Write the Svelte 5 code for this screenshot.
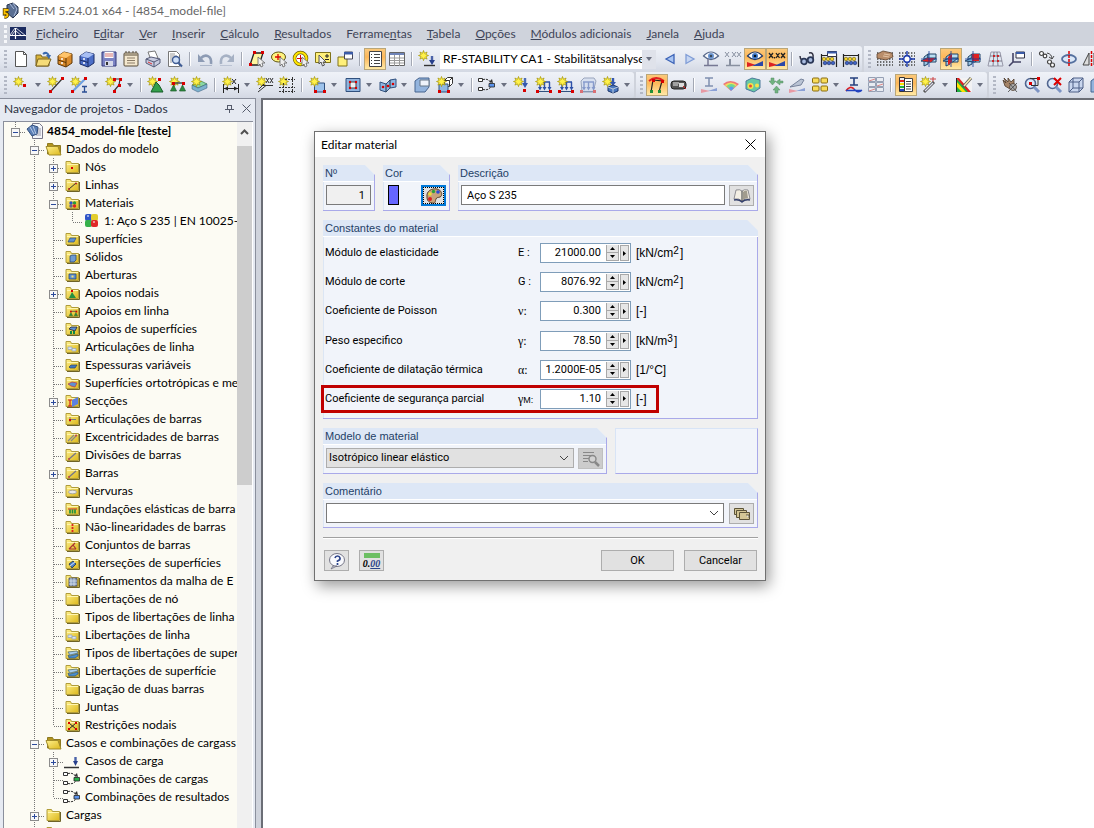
<script lang="ts">
	type Tool = { icon?: string; kind?: 'sep' | 'drop' | 'combo' | 'nav'; on?: boolean };
	type Node = { level: number; label: string; icon: string; open?: boolean; last?: boolean };

	// Reusable pieces of the 16x16 glyphs
	const star =
		'<path d="M4.500 -.5l1 2.800 2.600-1.300-1.200 2.600 2.600.9-2.600 1.100 1.200 2.500-2.600-1.200-1 2.700-1-2.700-2.600 1.200 1.200-2.500-2.600-1.100 2.600-.9L.9 1l2.600 1.300z" fill="#fff14a" stroke="#a39200" stroke-width=".7"/>';
	const dot = (x: number, y: number, c = '#d80000') => `<rect x="${x}" y="${y}" width="3" height="3" fill="${c}"/>`;
	const cursor = '<path d="M9 6v9l2-2 1 3 2-1-1-3h3z" fill="#eee" stroke="#666" stroke-width=".8"/>';
	const lens =
		'<circle cx="6.500" cy="6.500" r="5" fill="#dce9fb" stroke="#51658f" stroke-width="1.600"/><path d="M10 10l5 5" stroke="#7d94c4" stroke-width="3"/>';
	const wedge = '<path d="M0 16V11L9 14z" fill="#d22"/><path d="M16 15V10L5 15z" fill="#2b48a8"/>';
	const folder =
		'<path d="M1 2.500h4.500l1 2h7v9H1z" fill="url(#gold)" stroke="#b09c3a"/><path d="M2 5.500h11" stroke="#fff6b0"/><path d="M14.500 5v9.500H2" stroke="#6e6328" fill="none"/>';
	const table =
		'<path d="M.5 1.500h15v13H.5z" fill="#fff" stroke="#666"/><path d="M1 2h14v2H1z" fill="#6f84b8"/><path d="M1 7h14M1 9.500h14M1 12h14M5.500 4v11M10.500 4v11" stroke="#999"/>';
	const dots =
		'<path d="M0 2h16M0 5h16M0 8h16M0 11h16M0 14h16" stroke="#444" stroke-width="1.400" stroke-dasharray="1.400 1.600"/>';
	const drawer = (a: string, b: string, c: string) =>
		`<path d="M1 5l6-4 8 2v9l-6 4-8-3z" fill="${b}" stroke="${c}"/><path d="M1 5l8 2 6-4-8-2z" fill="${a}"/><path d="M9 7v9M1 9l8 2.500" stroke="${c}"/><path d="M4 8h2M4 12h2" stroke="#fff" stroke-width="1.500"/>`;
	const curve = (c: string) =>
		`<path d="M14 13C15 4 8 3 4 7" stroke="${c}" stroke-width="2.600" fill="none"/><path d="M1 3v8h7z" fill="${c}"/><path d="M3 14.500h12" stroke="${c}" opacity=".6"/>`;
	const planes = (r: string) =>
		`<path d="M3 6l4-3v10l-4 2z" fill="#9cc7e6" stroke="#246"/><path d="M7 3h8v8H7z" fill="#b8ddf2" stroke="#246"/><path d="M0 10l6-3h9l-5 4z" fill="#6caad6" stroke="#246"/>${r}<path d="M8 0v16M0 8h16" stroke="#123b9a" stroke-width=".8"/>`;
	const combi = (c: string) =>
		`<path d="M-1.500 1.500h4v3h-4zM-1.500 10.500h4v3h-4z" fill="#fff" stroke="#333"/><path d="M3 2.500c5-1 7 1 8 4M3 12.500c5 1 7-1 8-3" stroke="#333" stroke-dasharray="2 1" fill="none"/><path d="M9 6.500h5.500v3.500H9z" fill="${c}" stroke="#222" stroke-width=".8"/><path d="M9 5l4 1-1-4z" fill="#333"/>`;
	const supports =
		'<path d="M2 6h12" stroke="#444" stroke-width="1.500"/><path d="M3.500 8l3 6h-6zM12.500 8l3 6h-6z" fill="#2d8a3f" stroke="#1b5c28" stroke-width=".7"/>' + dot(2, 5) + dot(12, 5);
	const abacus =
		'<path d="M.5 3v13M15.500 3v13M1 4.500h14" stroke="#222" stroke-width="1.200"/><g fill="#3d62c4" stroke="#12245e" stroke-width=".6"><circle cx="4" cy="12" r="1.800"/><circle cx="8" cy="12" r="1.800"/><circle cx="12" cy="12" r="1.800"/></g><g fill="#f4d428" stroke="#665500" stroke-width=".6"><circle cx="3" cy="8" r="1.800"/><circle cx="7" cy="8" r="1.800"/><circle cx="11" cy="8" r="1.800"/></g>';
	const eye = (y: number) =>
		`<path d="M.5 ${y}q7.500-8 15 0q-7.500 7-15 0z" fill="#fff" stroke="#243a66" stroke-width="1.200"/><circle cx="8" cy="${y}" r="3" fill="#3f78c8"/><circle cx="8" cy="${y}" r="1.300" fill="#012"/>`;
	const cube =
		'<path d="M1 5l4-4h10v10l-4 4H1z" fill="#c9d6ee" stroke="#4d5f86"/><path d="M1 5h10v10M11 5l4-4M5 1v10h10M5 11l-4 4" stroke="#4d5f86" fill="none"/>';
	const loads =
		'<path d="M2 14.500h12" stroke="#30507e"/><path d="M3 5h11M4 5v6M8.500 5v6M13.500 5v6" stroke="#2c50a8" stroke-width="1.400" fill="none"/><path d="M2 10h4l-2 3.500zM6.500 10h4l-2 3.500zM11.500 10h4l-2 3.500z" fill="#2c50a8"/><rect x="0" y="13" width="3" height="3" fill="#d80000"/><rect x="13" y="13" width="3" height="3" fill="#d80000"/>';
	const hand =
		'<path d="M0 3l6-3 9 2 1 4-7 3-5-1-4-1z" fill="#b98d6a" stroke="#5f4530" stroke-width=".8"/><path d="M6 5l6 1M7 3l6 1" stroke="#e2c3a4"/>';
	const stack = (a: string) =>
		`<path d="M0 8l6 3 9-4-6-3z" fill="${a}" stroke="#357a50" stroke-width=".7"/><path d="M0 12l6 3 9-4V7l-9 4-6-3z" fill="#7db2cf" stroke="#357" stroke-width=".5"/>`;
	const small = (body: string) => `<g transform="translate(4 5) scale(.55)">${body}</g>`;

	const icons: Record<string, string> = {
		app: '<path d="M5 2l6-2 5 4v6l-5 5-6-5z" fill="#5a6f93" stroke="#26344e"/><path d="M8 1l4 5M11 0l4 6-3 7" stroke="#a9badb" fill="none"/><path d="M6.500 7H2.500v3.500c4-1 4 4 0 3.500" stroke="#4a3700" stroke-width="3.400" fill="none"/><path d="M6.500 7H2.500v3.500c4-1 4 4 0 3.500" stroke="#ffc400" stroke-width="1.900" fill="none"/>',
		bridge: '<path d="M0 1h16v13H0z" fill="#1c2c60"/><path d="M0 9.500h16M5.500 2v11" stroke="#fff" stroke-width="1.200"/><path d="M5 2L0 9M6 2l10 8M6 5l6 5M5 5L2 9" stroke="#fff" stroke-width=".8"/>',
		new: '<path d="M2.500.5h8l3 3v12h-11z" fill="#fff" stroke="#555"/><path d="M10.500.5v3h3" fill="none" stroke="#555"/>',
		open: '<path d="M1 4h5l1 2h7v9H1z" fill="#d9b43a" stroke="#7a6320"/><path d="M3 8h13l-3 7H1z" fill="#f6dc78" stroke="#7a6320"/><path d="M8 3q4-3 6 2" stroke="#3c6bb0" stroke-width="2" fill="none"/><path d="M11 4h5l-2 4z" fill="#3c6bb0"/>',
		drawerA: drawer('#ffc46a', '#d98a2b', '#5c3607'),
		drawerB: drawer('#a8bff4', '#4d6fc8', '#1b2c66'),
		save: '<path d="M1 1h14v14H1z" fill="#7c84c4" stroke="#33397a"/><path d="M3.500 1h9v6h-9z" fill="#fff"/><path d="M4 3h8M4 5h8" stroke="#b33" stroke-width=".7"/><path d="M4 10h8v5H4z" fill="#d5d8ea"/><path d="M5 11h2v3H5z" fill="#333"/>',
		clip: '<rect x="1" y="2" width="14" height="13" rx="1" fill="#f4e8cf" stroke="#574a36"/><path d="M3 2V0M6 2V0M10 2V0M13 2V0M1.500 4h13" stroke="#574a36"/><path d="M4 7h8M4 9.500h8M4 12h8" stroke="#8b7d68"/>',
		print: '<path d="M3 1l7-1 3 7-7 2z" fill="#fff" stroke="#777"/><path d="M1 8l5-2 9 2v4l-6 4-8-4z" fill="#c7cbe0" stroke="#555a77"/><path d="M1 8l8 3 6-3M9 11v5" stroke="#555a77" fill="none"/><path d="M3 11l4 2" stroke="#d33"/>',
		preview: '<path d="M1.500.5h8l3 3v12h-11z" fill="#fff" stroke="#777"/><path d="M3 3h5M3 5h7M3 7h3M3 9h2M3 11h2" stroke="#999"/><circle cx="9" cy="9" r="3.500" fill="#cfe0f8" stroke="#3f5c94" stroke-width="1.400"/><path d="M11.500 12l3.500 3.500" stroke="#3f5c94" stroke-width="2.200"/>',
		undo: curve('#8d9bb4'),
		redo: `<g transform="matrix(-1 0 0 1 16 0)">${curve('#a6b1c4')}</g>`,
		selPoly: '<path d="M5 2h9l-4 12H1z" fill="#fff6a0" stroke="#222" stroke-width="1.300"/>' + dot(4, 0) + dot(12, 0) + dot(0, 12) + cursor,
		selEllipse: '<ellipse cx="7.500" cy="6" rx="7" ry="5" fill="#fdf27e" stroke="#5e5310"/><path d="M7 3v6M4 6h6" stroke="#d00" stroke-width="1.300"/>' + cursor,
		selRing: '<circle cx="7.500" cy="7.500" r="6" fill="#fff" stroke="#6b5a00" stroke-width="3.500"/><circle cx="7.500" cy="7.500" r="6" fill="none" stroke="#ffe600" stroke-width="2.200"/><path d="M7.500 4v7M4 7.500h7" stroke="#d00"/>' + cursor,
		selPlus: '<path d="M.5 1.500h15v10H.5z" fill="#fff07a" stroke="#80731a"/><path d="M12 3v4M10 5h4M10 8.500h4" stroke="#222"/><path d="M4 4v9l2-2 1.500 4 2-1-1.500-3h3z" fill="#eee" stroke="#555"/>',
		window: '<path d="M1 6h9v9H1z" fill="#fff07a" stroke="#80731a"/><path d="M7.500 1h8v7h-8z" fill="#fff" stroke="#445"/><path d="M7 1h9v2.500H7z" fill="#3a5ba8"/>',
		list: '<path d="M2.500.5h12v15h-12z" fill="#fff" stroke="#444"/><path d="M7 3.500h6M7 6.500h6M7 9.500h6M7 12.500h6" stroke="#444"/><path d="M4.500 3v11" stroke="#333" stroke-dasharray="1 2"/>',
		table,
		loadcase: star + '<path d="M5 14.500h11" stroke="#333" stroke-width="1.400"/><path d="M13 5v4" stroke="#4a62a8" stroke-width="2.400"/><path d="M10 9h6l-3 5z" fill="#28408c"/>',
		left: '<path d="M12 3.500v9L4 8z" fill="#a9c5f2" stroke="#3b62b6" stroke-width="1.300"/>',
		right: '<path d="M4 3.500v9L12 8z" fill="#c6d6f2" stroke="#7f9cd6" stroke-width="1.300"/>',
		eyeLoad: '<g opacity=".75">' + eye(5) + '<path d="M5 8v6M1 14.500h14" stroke="#557" stroke-width="1.500"/></g>',
		xxLoad: '<g stroke="#8890a0" fill="none"><path d="M0 1l4 5M4 1L0 6M7 1l4 5M11 1L7 6M12 1l4 5M16 1l-4 5"/><path d="M5 8v6" stroke-width="2"/><path d="M1 14.500h14" stroke-width="1.500"/></g>',
		eyeOn: eye(5) + wedge,
		xxOn: '<path d="M0 2l4 5M4 2L0 7M5.500 6v1.500M7 2l3.500 5M10.500 2L7 7M12 2l4 5M16 2l-4 5" stroke="#222" stroke-width="1.300"/>' + wedge,
		glasses: '<path d="M1 5q0 3 2 4M10 2q5-1 4 5" stroke="#334" stroke-width="1.500" fill="none"/><circle cx="5" cy="10.500" r="2.800" fill="#a8bbdf" stroke="#2b3858" stroke-width="1.800"/><circle cx="11.500" cy="9" r="2.800" fill="#a8bbdf" stroke="#2b3858" stroke-width="1.800"/>',
		abacusWin: abacus + '<path d="M6.500 .5h9v5h-9z" fill="#fff" stroke="#334"/><path d="M6 1.500h10" stroke="#3a5ba8" stroke-width="2"/>',
		abacus,
		gridHand: dots + hand,
		gridSnap: dots + '<path d="M8 0v16M0 8h16" stroke="#1c3bb0" stroke-width="1.400"/><circle cx="8" cy="8" r="3.200" fill="#fff" stroke="#1c3bb0" stroke-width="1.400"/>',
		planeA: planes('<path d="M1 10l5-3h8l-4 4z" fill="#e02020"/>'),
		planeB: planes('<path d="M5 6l4-3v8l-4 3z" fill="#e02020"/>'),
		planeC: planes('<path d="M7 3h7v7H7z" fill="#e02020"/>'),
		warp: '<path d="M4 1h9l3 14H1z" fill="#dfe6f0" stroke="#99a"/><path d="M7 1L6 15M10 1l1 14M3 5h11M2 10h13" stroke="#667" stroke-width=".8"/><g fill="#d80000"><circle cx="7" cy="5" r="1"/><circle cx="11" cy="5" r="1"/><circle cx="6" cy="10" r="1"/><circle cx="11" cy="10" r="1"/></g>',
		axisWin: '<path d="M4 2v9h8M4 11l-4 4" stroke="#446" stroke-width="1.600" fill="none"/><path d="M7 1h8.500v6H7z" fill="#fff" stroke="#334"/><path d="M7 2h8.500" stroke="#3a5ba8" stroke-width="2"/>',
		copyNodes: '<g fill="#fff" stroke="#444" stroke-width="1.200"><circle cx="2.500" cy="2.500" r="2"/><circle cx="6" cy="5" r="1.800"/><circle cx="10.500" cy="11" r="2"/><circle cx="13.500" cy="14" r="2"/></g><path d="M8 2q5 1 5 6M10 6l3 2 2-3" stroke="#444" fill="none"/>',
		rotate: '<ellipse cx="8" cy="8" rx="7" ry="4" fill="#dbe7f8" stroke="#55709f" stroke-width="1.800"/><path d="M8 0v16" stroke="#d00" stroke-width="1.500" stroke-dasharray="3 1"/>',
		mirror: '<path d="M6 2v12H0z" fill="#ddd" stroke="#444"/><path d="M8.500 0v16" stroke="#d00" stroke-width="1.500" stroke-dasharray="3 1"/><path d="M11 2v12h5z" fill="#ddd" stroke="#444"/>',

		node: star + dot(9, 7),
		line: star + '<path d="M3 14L14 2" stroke="#333" stroke-width="1.200"/>' + dot(1, 13) + dot(13, 0),
		member: star + '<path d="M2 14L14 2" stroke="#6e9fdf" stroke-width="2.200"/><path d="M11 9.500h5M11 15h5M13.500 9v6" stroke="#2a4e94" stroke-width="1.300"/>' + dot(0, 13) + dot(13, 0),
		poly: star + '<path d="M8 2h6l-1 6-5 6" stroke="#333" stroke-width="1.200" fill="none"/>' + dot(7, 1) + dot(13, 1) + dot(12, 7) + dot(7, 13),
		support: star + dot(10, 1) + '<path d="M8 5l3 3 4 7H3l3-6z" fill="#34a04c" stroke="#165c28"/>',
		supports: star + supports,
		surfSupport: stack('#8ad7a4') + star,
		dim: star + '<path d="M.5 7v9M15.500 7v9M1 11.500h14" stroke="#222"/><path d="M1 11.500l4-2v4zM15 11.500l-4-2v4z" fill="#222"/><path d="M9 2l4 5M13 2L9 7" stroke="#222"/>',
		xx: star + '<path d="M9 1l3 5M12 1L9 6M13 1l3 5M16 1l-3 5M6 8.500h10M9 8.500L1 15M7 7l-5 5" stroke="#333" fill="none"/>',
		guides: star + '<path d="M0 10.500h16M0 14.500h16M4.500 6v10M13.500 0v16M6 2.500h10" stroke="#333" stroke-dasharray="2 1"/>',
		surface: '<path d="M4.500 6h10v9h-10z" fill="#9dc3ec" stroke="#30507e"/>' + star + dot(4, 13) + dot(13, 13),
		opening: '<path d="M1 1.500h14v13H1z" fill="#8fb3dd" stroke="#30507e"/><path d="M5 5h6v6H5z" fill="#eef0f4" stroke="#444"/><g fill="#d80000"><circle cx="5" cy="5" r="1.200"/><circle cx="11" cy="5" r="1.200"/><circle cx="5" cy="11" r="1.200"/><circle cx="11" cy="11" r="1.200"/></g>',
		bridgeSurf: '<path d="M0 5l6 2 4-4 6-1v8l-6 1-4 4-6-2z" fill="#8fb7e2" stroke="#30507e"/><path d="M6 7v8M10 3v8" stroke="#234"/><g fill="#d80000"><circle cx="3" cy="10" r="1.300"/><circle cx="8" cy="9" r="1.300"/><circle cx="13" cy="7" r="1.300"/></g>',
		solid: '<path d="M1 4l4-3h10v9l-4 5H1z" fill="#93b4de" stroke="#47648f"/><path d="M6 3h9v6H6z" fill="#eef3fb" stroke="#678"/>',
		solidNew: '<path d="M7.500 3.500l3-3h5v6l-3 3h-5z" fill="#fff" stroke="#333"/><path d="M7 3.500h5.500V9M12.500 3.500l3-3" stroke="#333" fill="none"/><path d="M2 7h9v8H2z" fill="#8fb7e2" stroke="#30507e"/>' + star + dot(10, 13) + dot(1, 13),
		combiBlue: combi('#5b93ec'),
		nodeLoad: star + '<path d="M11 1v5" stroke="#4a6cb8" stroke-width="2.400"/><path d="M8 6h6l-3 5z" fill="#3458ae"/>' + dot(9, 12),
		lineLoad: loads + star,
		memberLoad: loads + star,
		surfLoad: '<g opacity=".5"><path d="M4 1h10l2 3-3 11H2L1 4z" fill="#c9d6ee" stroke="#4d5f86"/>' + loads + '</g>',
		solidLoad: star + '<path d="M10 1v4" stroke="#3458ae" stroke-width="2.400"/><path d="M7 5h6l-3 4z" fill="#3458ae"/><path d="M5 10l5-2 5 2v4l-5 2-5-2z" fill="#4a78c0" stroke="#1d376c"/><path d="M5 10l5 2 5-2M10 12v4" stroke="#bcd" fill="none"/>',
		frame: '<path d="M2 15L4 3l9 1-3 11" stroke="#222" stroke-width="1.200" fill="none"/><path d="M0 4q7-6 15 0" stroke="#e02020" stroke-width="1.800" fill="none"/>' + dot(1, 13, '#229038') + dot(9, 13, '#229038') + dot(3, 2) + dot(12, 3),
		tape: '<rect x="0" y="4" width="15" height="8" rx="3" fill="#555" stroke="#222"/><path d="M2 6h6M2 8h5" stroke="#eee"/><rect x="8" y="6" width="5" height="4" fill="#ddd"/><path d="M12 9l3 3" stroke="#d22"/>',
		moment: '<path d="M4 1h8M8 1v8M4 9h8" stroke="#8090b0" stroke-width="1.500"/><path d="M0 16v-4l9 2z" fill="#e79aa4"/><path d="M16 11v3H7z" fill="#8aa0d6"/>',
		rainbow: '<path d="M0 7q7-6 16 0l-8 7z" fill="#f07878"/><path d="M1.500 8q6-5 12.500 0l-6 5z" fill="#f0dc60"/><path d="M3.500 9q5-4 9 0l-5 4z" fill="#70d890"/><path d="M6 11q2-3 5 0l-3 3z" fill="#5c9cf0"/>',
		isoCube: '<path d="M1 4l6-3 8 2v8l-6 4-8-3z" fill="#66c9a4" stroke="#4c7a9a"/><circle cx="5.500" cy="9" r="3" fill="#f5e24a"/><circle cx="5.500" cy="9" r="1.500" fill="#e34b3a"/><circle cx="12" cy="8.500" r="2" fill="#f5e24a"/>',
		arrowsG: '<g fill="#6fb27f" stroke="#5a8f68" stroke-width=".5"><path d="M4 1h3v3h2L5.500 8 2 4h2z"/><path d="M16 4h-3V2l-4 3 4 3V6h3z"/><path d="M8 16h3v-3h2L9.500 9 6 13h2z"/></g>',
		blade: '<path d="M1 10L12 2l3 1-3 5z" fill="#b9c3d4" stroke="#78849c"/><path d="M0 16v-4l9 2z" fill="#e79aa4"/><path d="M16 11v3H7z" fill="#8aa0d6"/>',
		blocks: '<g fill="#f8dc5a" stroke="#8a6d10"><rect x=".5" y="1" width="6.500" height="5" rx="1"/><rect x="9" y="1" width="6.500" height="5" rx="1"/><rect x=".5" y="9" width="6.500" height="5" rx="1"/><rect x="9" y="9" width="6.500" height="5" rx="1"/></g>',
		ibeam: '<path d="M4 1h8M8 1v7M4 8h8" stroke="#26407e" stroke-width="1.600"/><path d="M0 14q4-6 8-2" stroke="#d22" stroke-width="1.800" fill="none"/><path d="M0 13.500h16M8 12q4 5 8 1" stroke="#2343c0" stroke-width="1.300" fill="none"/>',
		waves: '<path d="M.5.500h7v4h-7zM8.500.500h7v4h-7zM.5 5.500h7v4h-7zM8.500 5.500h7v4h-7zM.5 10.500h7v4h-7zM8.500 10.500h7v4h-7z" fill="#e8ebf2" stroke="#96a0b4"/><path d="M1 4l6-2M9 9l6-2M1 14l6-2" stroke="#d88"/>',
		legend: '<path d="M4.500 1.500h10v13h-10z" fill="#fff" stroke="#444"/><path d="M8 4.500h5M8 7h5M8 9.500h5M8 12h5" stroke="#444"/><path d="M1.500.500h5v14h-5z" fill="#eee" stroke="#333"/><path d="M2 3h4v2H2z" fill="#e02020"/><path d="M2 6h4v2H2z" fill="#ffe000"/><path d="M2 9h4v2H2z" fill="#20b040"/><path d="M2 12h4v2H2z" fill="#2343c0"/>',
		wand: star + '<path d="M9 2h6M12 0v5" stroke="#c44"/><path d="M3 15L13 5" stroke="#555" stroke-width="3"/><path d="M4 14l8-8" stroke="#dde" stroke-width="1.200"/>',
		palette: '<path d="M0 1h16v14H0z" fill="#f2f2f4"/><path d="M0 1v14h14z" fill="#20b040"/><path d="M0 1h3l12 14h-3z" fill="#e02020"/><path d="M0 4l10 11H6L0 9z" fill="#ffe000"/><path d="M.5 1v14" stroke="#222"/><path d="M15 1L7 10" stroke="#555" stroke-width="3"/><path d="M15 1L8 9" stroke="#f4e6b0" stroke-width="1.600"/>',
		pan: '<g fill="#a58468" stroke="#4d3a2a" stroke-width=".8"><path d="M1 3l3 3-2-5 4 4V1l3 4 3-3v6l-4 4-5-3z"/><circle cx="11" cy="10" r="3.500" fill="#aaa"/></g><path d="M6 15l9-9M7 6l8 9" stroke="#444" stroke-width=".8"/>',
		zoomWin: lens + '<path d="M6 1.500h8v7H7" stroke="#333" fill="none"/>' + dot(13, 0) + dot(5, 5),
		zoomX: lens + '<path d="M8 1l7 7M15 1L8 8" stroke="#d00" stroke-width="2"/>',
		cube,

		// tree
		doc: '<path d="M5.500.5h7l3 3v12h-10z" fill="#f4f6fa" stroke="#778"/><path d="M10 6h4M10 8h4M9 10h5M9 12h5" stroke="#99a"/><path d="M0 6l5-4 6 2-1 7-5 2z" fill="#5b7fb6" stroke="#33507e"/><path d="M3 4l4 7M6 3l3 8" stroke="#b8cbe6"/>',
		folderOpen: '<path d="M1.500 13V2.500h5l1 2h7v8z" fill="#b3951f" stroke="#8d7a22"/><path d="M0 5.500h12l3 8.500H3z" fill="url(#gold)" stroke="#a08b2a"/>',
		folder,
		fNode: folder + '<rect x="6" y="8" width="2" height="2" fill="#d80000"/>',
		fLine: folder + '<path d="M4 12l7-6" stroke="#333"/><g fill="#a22"><circle cx="4" cy="12" r="1"/><circle cx="11" cy="6.500" r="1"/></g>',
		fMat: folder + '<circle cx="6" cy="8" r="1.700" fill="#2b50c8"/><circle cx="9.500" cy="8" r="1.700" fill="#2a9a3a"/><circle cx="6" cy="11" r="1.700" fill="#668"/><circle cx="9.500" cy="11" r="1.700" fill="#d22"/>',
		mat: '<rect x="1" y="1" width="7" height="7" rx="2" fill="#2f55c8"/><rect x="7" y="1" width="7" height="7" rx="2" fill="#e3cd2c"/><rect x="1" y="7" width="7" height="7" rx="2" fill="#35b04a"/><rect x="7" y="7" width="7" height="7" rx="2" fill="#e02828"/><path d="M3 3h2M9 9h2" stroke="#fff"/>',
		fSurf: folder + '<path d="M3 11l2-4h6l-2 4z" fill="#5e90d0" stroke="#294a7a" stroke-width=".7"/>',
		fSolid: folder + '<path d="M5 7l2-1h4v5l-2 2H5z" fill="#6f9bd0" stroke="#294a7a" stroke-width=".8"/>',
		fOpen: folder + '<path d="M4 7h7v5H4z" fill="#5e90d0" stroke="#294a7a" stroke-width=".8"/><path d="M6.500 8.500h2v2h-2z" fill="#f4e070"/>',
		fSupp: folder + '<rect x="6" y="5" width="2" height="2" fill="#d80000"/><path d="M7 7l4 6H4z" fill="#249040"/>',
		fSupps: folder + small(supports),
		fSurfSupp: folder + '<path d="M4 8l2-2h6l-2 4z" fill="#5e90d0" stroke="#223" stroke-width=".8"/><path d="M6 10v3M9 10v3" stroke="#184" stroke-width="2"/>',
		fHinge: folder + '<path d="M3 8h4v2.500H3zM7 9.500h4V12H7z" fill="#dfe6f0" stroke="#9ab" stroke-width=".8"/>',
		fThick: folder + '<path d="M4 10l2-2h6l-2 3H5z" fill="#3e78c4" stroke="#345" stroke-width=".7"/>',
		fOrtho: folder + '<path d="M3 9l4-2 5 1-2 4-4-1z" fill="#5e90d0" stroke="#b44" stroke-width=".8"/>',
		fSect: folder + '<path d="M7 7l6-3v7l-6 3z" fill="#5b80e0"/><path d="M3 7h4M5 7v6M3 13h4" stroke="#c22" stroke-width="1.200"/>',
		fMHinge: folder + '<path d="M5 6v5M6 8.500h5" stroke="#777"/><rect x="4" y="8" width="2" height="2" fill="#d80000"/>',
		fEcc: folder + '<path d="M3 12l6-6M6 12l6-6" stroke="#888" stroke-width="1.200"/><circle cx="11" cy="6.500" r="1" fill="#c44"/>',
		fBar: folder + '<path d="M4 12l7-6" stroke="#778" stroke-width="1.400"/><circle cx="4" cy="12" r="1" fill="#b44"/>',
		fRib: folder + '<ellipse cx="7.500" cy="9" rx="4" ry="1.800" fill="#e8e8e8" stroke="#999" stroke-width=".8"/>',
		fFound: folder + '<path d="M3 8h9" stroke="#c22"/><path d="M5 8.500v4M7.500 8.500v4M10 8.500v4" stroke="#249040" stroke-width="1.700"/>',
		fNonlin: folder + '<path d="M7.500 5v8" stroke="#d22" stroke-width="1.800" stroke-dasharray="2 1"/>',
		fSet: folder + '<path d="M4 12l6-6M4 12h7M8 8l3 4" stroke="#a33" stroke-width="1.200"/>',
		fInter: folder + '<path d="M4 9l4-3 3 3-4 4z" fill="#4a80cc" stroke="#234" stroke-width=".8"/><path d="M5 11l5-4" stroke="#fff" stroke-width=".8"/>',
		fMesh: folder + '<path d="M4 5h8v8H4z" fill="#8aa0c0" stroke="#445" stroke-width=".8"/><path d="M6 5v8M9 5v8M4 8h8M4 11h8" stroke="#dfe6f0" stroke-width=".7"/>',
		fRel: folder + '<path d="M3 7l9-1 1 2-8 2z" fill="#a8cdf0" stroke="#467" stroke-width=".7"/><path d="M3 10l2 1 8-2v2l-3 2H4z" fill="#4a90d0" stroke="#357" stroke-width=".7"/>',
		fRestr: folder + '<path d="M4 6l7 6M11 6l-7 6" stroke="#222"/><g fill="#d80000"><rect x="3" y="5" width="2" height="2"/><rect x="10" y="5" width="2" height="2"/><rect x="3" y="11" width="2" height="2"/><rect x="10" y="11" width="2" height="2"/></g>',
		load: '<path d="M-1 14.500h15" stroke="#333" stroke-width="1.500"/><path d="M10.500 4v4" stroke="#4a62a8" stroke-width="2.400"/><path d="M8 8h5l-2.500 5z" fill="#28408c"/>',
		combiG: combi('#28b048'),

		// dialog
		paint: '<path d="M1 9C0 3 6 0 11 1s6 7 3 8-3 0-4 2 0 5-4 4-5-3-5-6z" fill="#c9a27a" stroke="#5a4128"/><circle cx="4" cy="6" r="1.800" fill="#efe030"/><circle cx="7.500" cy="3.500" r="1.700" fill="#2ba23a"/><circle cx="12" cy="4" r="1.800" fill="#2848d8"/><circle cx="4" cy="11" r="2" fill="#d82020"/>',
		book: '<path d="M0 11l2-9q4-1 6 1 2-2 6-1l2 9q-5-1-8 2-3-3-8-2z" fill="#f3efe4" stroke="#77777f" stroke-width=".8"/><path d="M8 3v10" stroke="#555" stroke-width="1.200"/><path d="M9 4q2-2 4-1l1 7q-3 0-5 2z" fill="#a19c8e"/><path d="M0 12q5-1 8 2 3-3 8-2" stroke="#34406c" stroke-width="1.500" fill="none"/>',
		detail: '<path d="M0 1.500h11M0 4.500h9M0 7.500h6M0 10.500h5" stroke="#888"/><circle cx="9.500" cy="8" r="3.500" fill="#d2d2d2" stroke="#888" stroke-width="1.400"/><path d="M12 11l4 4" stroke="#888" stroke-width="2.500"/>',
		cards: '<g fill="#d4c695" stroke="#5c5438"><path d="M.5 2.500h9v6h-9z"/><path d="M2.500 4.500h10v7h-10z"/><path d="M5.500 6.500h10v7h-10z"/></g><path d="M12 9h3v3" fill="#fff" stroke="#5c5438"/>',
		help: '<ellipse cx="8" cy="7" rx="7.500" ry="6.500" fill="#f8f9fd" stroke="#778"/><path d="M4 13l-2 3 6-3z" fill="#ccd" stroke="#667" stroke-width=".7"/><path d="M6 5q.5-2 2.500-2t2.500 2-2.500 3v1M8.500 10v2" stroke="#2c448a" stroke-width="1.700" fill="none"/>'
	};

	const menus = [
		'&Ficheiro', 'E&ditar', '&Ver', '&Inserir', '&Cálculo', '&Resultados', 'Ferrame&ntas',
		'&Tabela', '&Opções', '&Módulos adicionais', '&Janela', '&Ajuda'
	].map((text) => {
		const at = text.indexOf('&');
		return { before: text.slice(0, at), key: text[at + 1], after: text.slice(at + 2) };
	});

	// "|" separator, "+" split button with caret, "*" pressed, "<" narrow
	function parseTools(line: string): Tool[] {
		return line.split(' ').map((word) => {
			if (word === '|') return { kind: 'sep' };
			if (word === 'COMBO') return { kind: 'combo' };
			if (word.startsWith('+')) return { kind: 'drop', icon: word.slice(1) };
			if (word.startsWith('*')) return { on: true, icon: word.slice(1) };
			if (word.startsWith('<')) return { kind: 'nav', icon: word.slice(1) };
			return { icon: word };
		});
	}

	const toolRows: Tool[][][] = [
		[
			'new open drawerA drawerB save clip print preview | undo redo | selPoly selEllipse selRing selPlus window | *list table | loadcase COMBO <left <right eyeLoad xxLoad *eyeOn *xxOn | glasses abacusWin abacus',
			'gridHand gridSnap planeA *planeB planeC warp axisWin | copyNodes rotate mirror'
		].map(parseTools),
		[
			'+node line +member +poly | support supports surfSupport | +dim xx guides | +surface +opening +bridgeSurf solid +solidNew | +combiBlue nodeLoad lineLoad memberLoad surfLoad +solidLoad',
			'*frame tape | moment rainbow isoCube arrowsG blade +blocks ibeam waves | *legend +wand +palette',
			'pan zoomWin zoomX cube solid'
		].map(parseTools)
	];

	let nodes: Node[] = [
		{ level: 0, label: '4854_model-file [teste]', icon: 'doc', open: true, last: true },
		{ level: 1, label: 'Dados do modelo', icon: 'folderOpen', open: true },
		{ level: 2, label: 'Nós', icon: 'fNode', open: false },
		{ level: 2, label: 'Linhas', icon: 'fLine', open: false },
		{ level: 2, label: 'Materiais', icon: 'fMat', open: true },
		{ level: 3, label: '1: Aço S 235 | EN 10025-2:', icon: 'mat', last: true },
		{ level: 2, label: 'Superfícies', icon: 'fSurf' },
		{ level: 2, label: 'Sólidos', icon: 'fSolid' },
		{ level: 2, label: 'Aberturas', icon: 'fOpen' },
		{ level: 2, label: 'Apoios nodais', icon: 'fSupp', open: false },
		{ level: 2, label: 'Apoios em linha', icon: 'fSupps' },
		{ level: 2, label: 'Apoios de superfícies', icon: 'fSurfSupp' },
		{ level: 2, label: 'Articulações de linha', icon: 'fHinge' },
		{ level: 2, label: 'Espessuras variáveis', icon: 'fThick' },
		{ level: 2, label: 'Superfícies ortotrópicas e me', icon: 'fOrtho' },
		{ level: 2, label: 'Secções', icon: 'fSect', open: false },
		{ level: 2, label: 'Articulações de barras', icon: 'fMHinge' },
		{ level: 2, label: 'Excentricidades de barras', icon: 'fEcc' },
		{ level: 2, label: 'Divisões de barras', icon: 'fBar' },
		{ level: 2, label: 'Barras', icon: 'fBar', open: false },
		{ level: 2, label: 'Nervuras', icon: 'fRib' },
		{ level: 2, label: 'Fundações elásticas de barra', icon: 'fFound' },
		{ level: 2, label: 'Não-linearidades de barras', icon: 'fNonlin' },
		{ level: 2, label: 'Conjuntos de barras', icon: 'fSet' },
		{ level: 2, label: 'Interseções de superfícies', icon: 'fInter' },
		{ level: 2, label: 'Refinamentos da malha de E', icon: 'fMesh' },
		{ level: 2, label: 'Libertações de nó', icon: 'folder' },
		{ level: 2, label: 'Tipos de libertações de linha', icon: 'folder' },
		{ level: 2, label: 'Libertações de linha', icon: 'fHinge' },
		{ level: 2, label: 'Tipos de libertações de super', icon: 'fRel' },
		{ level: 2, label: 'Libertações de superfície', icon: 'fRel' },
		{ level: 2, label: 'Ligação de duas barras', icon: 'folder' },
		{ level: 2, label: 'Juntas', icon: 'folder' },
		{ level: 2, label: 'Restrições nodais', icon: 'fRestr', last: true },
		{ level: 1, label: 'Casos e combinações de cargass', icon: 'folderOpen', open: true },
		{ level: 2, label: 'Casos de carga', icon: 'load', open: false },
		{ level: 2, label: 'Combinações de cargas', icon: 'combiG' },
		{ level: 2, label: 'Combinações de resultados', icon: 'combiBlue', last: true },
		{ level: 1, label: 'Cargas', icon: 'folder', open: false },
		{ level: 1, label: '', icon: 'folder' }
	];

	let constants = [
		{ id: 'e', label: 'Módulo de elasticidade', symbol: 'E :', value: '21000.00', unit: 'kN/cm', power: '2' },
		{ id: 'g', label: 'Módulo de corte', symbol: 'G :', value: '8076.92', unit: 'kN/cm', power: '2' },
		{ id: 'nu', label: 'Coeficiente de Poisson', symbol: 'ν:', value: '0.300', unit: '-', power: '' },
		{ id: 'gamma', label: 'Peso especifico', symbol: 'γ:', value: '78.50', unit: 'kN/m', power: '3' },
		{ id: 'alpha', label: 'Coeficiente de dilatação térmica', symbol: 'α:', value: '1.2000E-05', unit: '1/°C', power: '' },
		{ id: 'gm', label: 'Coeficiente de segurança parcial', symbol: 'γM:', value: '1.10', unit: '-', power: '', marked: true }
	];

	let description = 'Aço S 235';
	let comment = '';

	function visible(list: Node[]): Node[] {
		let hiddenBelow = Infinity;
		return list.filter((node) => {
			if (node.level > hiddenBelow) return false;
			hiddenBelow = node.open === false ? node.level : Infinity;
			return true;
		});
	}

	function toggle(node: Node) {
		node.open = !node.open;
		nodes = nodes;
	}

	function isGuided(node: Node, column: number): boolean {
		return column > 0 && column < 3 && column < node.level;
	}
</script>

<svg class="defs" width="0" height="0" aria-hidden="true">
	<linearGradient id="gold" x1="0" y1="0" x2="1" y2="1">
		<stop offset="0" stop-color="#fff08c" />
		<stop offset="1" stop-color="#dcb81c" />
	</linearGradient>
</svg>

<div class="app">
	<header class="title-bar">
		<svg class="icon" viewBox="0 0 16 16" aria-hidden="true">{@html icons.app}</svg>
		<span>RFEM 5.24.01 x64 - [4854_model-file]</span>
	</header>

	<nav class="menu-bar">
		<span class="grip"></span>
		<svg class="icon" viewBox="0 0 16 16" aria-hidden="true">{@html icons.bridge}</svg>
		{#each menus as menu}
			<button class="menu">{menu.before}<u>{menu.key}</u>{menu.after}</button>
		{/each}
	</nav>

	{#each toolRows as row}
		<div class="tool-row">
			{#each row as group}
				<div class="tool-group" role="toolbar">
					<span class="grip"></span>
					{#each group as tool}
						{#if tool.kind === 'sep'}
							<span class="sep"></span>
						{:else if tool.kind === 'combo'}
							<div class="case-combo">
								<select aria-label="Caso de carga">
									<option>RF-STABILITY CA1 - Stabilitätsanalyse</option>
								</select>
								<span class="case-arrow"><svg class="caret" viewBox="0 0 6 4"><path d="M0 0h6L3 4z" /></svg></span>
							</div>
						{:else}
							<button
								class="tool"
								class:tool--on={tool.on}
								class:tool--drop={tool.kind === 'drop'}
								class:tool--nav={tool.kind === 'nav'}
								aria-label={tool.icon}
							>
								<svg class="icon" viewBox="0 0 16 16" fill="none">{@html icons[tool.icon ?? '']}</svg>
								{#if tool.kind === 'drop'}
									<svg class="caret" viewBox="0 0 6 4"><path d="M0 0h6L3 4z" /></svg>
								{/if}
							</button>
						{/if}
					{/each}
				</div>
			{/each}
		</div>
	{/each}

	<div class="main">
		<aside class="navigator">
			<div class="nav-head">
				<h2>Navegador de projetos - Dados</h2>
				<button aria-label="Fixar">
					<svg viewBox="0 0 9 9"><path d="M2.500 1v4M6.500 1v4M2 1.500h5M0 5.500h9M4.500 6v3" /></svg>
				</button>
				<button aria-label="Fechar painel">
					<svg viewBox="0 0 9 9"><path d="M.5.5l8 8M8.500.5l-8 8" /></svg>
				</button>
			</div>
			<div class="tree-box">
				<ul class="tree">
					{#each visible(nodes) as node}
						<li class="node" class:node--root={node.level === 0}>
							{#each Array(node.level + 1) as _, column}
								{#if column < node.level}
									<svg class="guide" viewBox="0 0 19 18">
										{#if isGuided(node, column)}<path d="M9.500 0v18" />{/if}
									</svg>
								{:else}
									<svg class="guide" viewBox="0 0 19 18">
										<path d={node.last ? 'M9.500 0v9' : 'M9.500 0v18'} />
										<path d="M10 10.500h9" />
										{#if node.open !== undefined}
											<!-- svelte-ignore a11y_click_events_have_key_events -->
											<g class="expander" role="button" tabindex="-1" aria-label="Expandir" on:click={() => toggle(node)}>
												<rect x="5.500" y="6.500" width="8" height="8" />
												<path class="sign" d={node.open ? 'M7 10.500h5' : 'M7 10.500h5M9.500 8v5'} />
											</g>
										{/if}
									</svg>
								{/if}
							{/each}
							<svg class="icon" viewBox="0 0 16 16" fill="none">{@html icons[node.icon]}</svg>
							<span class="node-label">{node.label}</span>
						</li>
					{/each}
				</ul>
				<div class="scrollbar">
					<svg viewBox="0 0 9 6"><path d="M1 5l3.500-3.500L8 5" /></svg>
					<span class="thumb"></span>
				</div>
			</div>
		</aside>

		<main class="workspace">
			<section class="dialog" role="dialog" aria-labelledby="dialog-title">
				<div class="dialog-title">
					<h1 id="dialog-title">Editar material</h1>
					<button aria-label="Fechar">
						<svg viewBox="0 0 11 11"><path d="M.5.5l10 10M10.500.5l-10 10" /></svg>
					</button>
				</div>

				<form class="dialog-body" on:submit|preventDefault>
					<div class="group-row">
						<div class="group group--number">
							<label class="group-head" for="number">Nº</label>
							<div class="group-body"><input id="number" class="field field--grey" value="1" readonly /></div>
						</div>
						<div class="group group--color">
							<h3 class="group-head">Cor</h3>
							<div class="group-body group-body--color">
								<span class="swatch"></span>
								<button type="button" class="tile tile--focus" aria-label="Escolher cor">
									<svg class="icon" viewBox="0 0 16 16">{@html icons.paint}</svg>
								</button>
							</div>
						</div>
						<div class="group group--grow">
							<label class="group-head" for="description">Descrição</label>
							<div class="group-body">
								<input id="description" class="field" bind:value={description} />
								<button type="button" class="tile" aria-label="Biblioteca">
									<svg class="icon" viewBox="0 0 16 16">{@html icons.book}</svg>
								</button>
							</div>
						</div>
					</div>

					<div class="group group--constants">
						<h3 class="group-head">Constantes do material</h3>
						<div class="constants">
							{#each constants as row (row.id)}
								<div class="constant">
									<label for={row.id}>{row.label}</label>
									<span class="symbol" class:symbol--greek={row.symbol.length < 3 || row.marked}>
										{#if row.marked}γ<small>M:</small>{:else}{row.symbol}{/if}
									</span>
									<div class="spin">
										<input id={row.id} bind:value={row.value} />
										<span class="spin-pair">
											<button type="button" aria-label="Aumentar"><svg viewBox="0 0 5 3"><path d="M0 3h5L2.500 0z" /></svg></button>
											<button type="button" aria-label="Diminuir"><svg viewBox="0 0 5 3"><path d="M0 0h5L2.500 3z" /></svg></button>
										</span>
										<button type="button" class="spin-more" aria-label="Mais">
											<svg viewBox="0 0 3 5"><path d="M0 0v5l3-2.500z" /></svg>
										</button>
									</div>
									<span class="unit">[{row.unit}{#if row.power}<sup>{row.power}</sup>{/if}]</span>
									{#if row.marked}<span class="mark"></span>{/if}
								</div>
							{/each}
						</div>
					</div>

					<div class="group-row">
						<div class="group group--grow">
							<label class="group-head" for="model">Modelo de material</label>
							<div class="group-body">
								<div class="combo combo--grey">
									<select id="model">
										<option>Isotrópico linear elástico</option>
									</select>
									<svg class="chevron" viewBox="0 0 10 6"><path d="M1 1l4 4 4-4" /></svg>
								</div>
								<button type="button" class="tile tile--off" aria-label="Detalhes" disabled>
									<svg class="icon" viewBox="0 0 16 16">{@html icons.detail}</svg>
								</button>
							</div>
						</div>
						<div class="blank"></div>
					</div>

					<div class="group">
						<label class="group-head" for="comment">Comentário</label>
						<div class="group-body group-body--comment">
							<div class="combo">
								<input id="comment" bind:value={comment} />
								<svg class="chevron" viewBox="0 0 10 6"><path d="M1 1l4 4 4-4" /></svg>
							</div>
							<button type="button" class="tile" aria-label="Comentários">
								<svg class="icon" viewBox="0 0 16 16">{@html icons.cards}</svg>
							</button>
						</div>
					</div>

					<hr />

					<div class="actions">
						<button type="button" class="tile" aria-label="Ajuda">
							<svg class="icon" viewBox="0 0 16 16" fill="none">{@html icons.help}</svg>
						</button>
						<button type="button" class="tile tile--units" aria-label="Unidades">
							<span class="ruler"></span>
							<span>0.<u>00</u></span>
						</button>
						<span class="spacer"></span>
						<button type="submit" class="push">OK</button>
						<button type="button" class="push">Cancelar</button>
					</div>
				</form>
			</section>
		</main>
	</div>
</div>

<style>
	:global(body) {
		margin: 0;
		overflow: hidden;
	}

	.defs {
		position: absolute;
	}

	.app {
		display: flex;
		flex-direction: column;
		height: 100vh;
		overflow: hidden;
		background: #cfd3dc;
		color: #000;
		font: 12px/18px Lato, 'Open Sans', sans-serif;
	}

	button,
	input,
	select {
		box-sizing: border-box;
		margin: 0;
		padding: 0;
		border: none;
		border-radius: 0;
		background: transparent;
		color: inherit;
		font: inherit;
		appearance: none;
	}

	h1,
	h2,
	h3 {
		margin: 0;
		font: inherit;
	}

	.icon {
		width: 16px;
		height: 16px;
		flex: none;
		overflow: visible;
	}

	.title-bar {
		display: flex;
		align-items: center;
		gap: 5px;
		height: 22px;
		padding-left: 2px;
		background: #fff;
		color: #666;
	}

	.menu-bar {
		display: flex;
		align-items: center;
		height: 24px;
		color: #3e4457;
	}

	.menu-bar .icon {
		margin-right: 2px;
	}

	.menu {
		padding: 0 7px 0 8px;
		white-space: nowrap;
	}

	.grip {
		flex: none;
		width: 3px;
		height: 18px;
		margin: 0 3px 0 4px;
		background: repeating-linear-gradient(#f7f8fb 0 3px, transparent 3px 5px);
	}

	.tool-row {
		display: flex;
		height: 26px;
	}

	.tool-group {
		display: flex;
		flex: none;
		align-items: center;
		margin-right: 2px;
		border-radius: 0 3px 3px 0;
		background: linear-gradient(#eff2f8, #e2e6ef 60%, #d3d8e3);
	}

	.tool-group:last-child {
		flex: 1 0 auto;
	}

	.tool-group .grip {
		background: repeating-linear-gradient(#b3b8c5 0 2px, transparent 2px 4px);
	}

	.sep {
		width: 1px;
		height: 14px;
		margin: 0 3px;
		border-right: 1px solid #fff;
		background: #a3a8b4;
	}

	.tool {
		display: flex;
		align-items: center;
		justify-content: center;
		width: 22px;
		height: 22px;
	}

	.tool--drop {
		gap: 5px;
		width: 35px;
	}

	.tool--nav {
		width: 20px;
	}

	.tool--on {
		border: 1px solid #b9a679;
		background: linear-gradient(#fbc97b, #fdb759 40%, #ffe9a6);
	}

	.caret {
		width: 6px;
		height: 4px;
		fill: #6b7080;
	}

	.case-combo {
		display: flex;
		width: 216px;
		height: 19px;
		margin: 0 4px 0 2px;
		background: #fff;
	}

	.case-combo select {
		flex: 1;
		min-width: 0;
		padding-left: 3px;
	}

	.case-arrow {
		display: flex;
		align-items: center;
		justify-content: center;
		width: 14px;
		background: #dfe2ea;
	}

	.main {
		display: flex;
		flex: 1;
		min-height: 0;
	}

	.navigator {
		display: flex;
		flex: none;
		flex-direction: column;
		box-sizing: border-box;
		width: 256px;
		border-top: 1px solid #8a8f9c;
		border-right: 1px solid #8a8f9c;
		background: #e6eaf2;
	}

	.nav-head {
		display: flex;
		align-items: center;
		gap: 8px;
		height: 19px;
		padding: 0 4px;
		color: #2a3142;
	}

	.nav-head h2 {
		flex: 1;
		white-space: nowrap;
	}

	.nav-head svg {
		display: block;
		width: 9px;
		height: 9px;
		fill: none;
		stroke: #555b6b;
	}

	.tree-box {
		display: flex;
		flex: 1;
		min-height: 0;
		margin: 3px 2px 0 3px;
		border-top: 1px solid #8a8f9c;
		border-left: 1px solid #8a8f9c;
		background: #fcfbf3;
	}

	.tree {
		flex: 1;
		min-width: 0;
		margin: 0;
		padding: 0 0 0 2px;
		overflow: hidden;
		list-style: none;
	}

	.node {
		display: flex;
		align-items: center;
		height: 18px;
		white-space: nowrap;
	}

	.node--root {
		font-weight: 700;
	}

	.node .icon {
		margin: 0 4px 0 2px;
	}

	.guide {
		flex: none;
		width: 19px;
		height: 18px;
		fill: none;
		stroke: #777;
		stroke-dasharray: 1 1;
	}

	.expander {
		cursor: pointer;
		stroke-dasharray: none;
	}

	.expander rect {
		fill: #f8f8f8;
		stroke: #8c8c8c;
	}

	.sign {
		stroke: #2b4a9b;
	}

	.scrollbar {
		display: flex;
		flex-direction: column;
		align-items: center;
		width: 15px;
		border-right: 1px solid #fff;
		background: #f0f0f0;
	}

	.scrollbar svg {
		width: 9px;
		height: 6px;
		margin: 7px 0 11px;
		fill: none;
		stroke: #505050;
		stroke-width: 2;
	}

	.thumb {
		width: 100%;
		height: 48%;
		background: #cdcdcd;
	}

	.workspace {
		position: relative;
		flex: 1;
		margin-left: 5px;
		border-top: 2px solid #6b6e76;
		border-left: 2px solid #6b6e76;
		background: #fff;
	}

	.dialog {
		position: absolute;
		top: 31px;
		left: 51px;
		box-sizing: border-box;
		width: 452px;
		border: 1px solid #707070;
		background: #f0f0f0;
		box-shadow: 3px 5px 14px rgba(0, 0, 0, 0.4);
		font: 11px/14px Roboto, 'Open Sans', sans-serif;
	}

	.dialog-title {
		display: flex;
		align-items: center;
		justify-content: space-between;
		height: 25px;
		padding: 0 9px 0 6px;
		background: #fff;
		font: 12px/16px Lato, 'Open Sans', sans-serif;
	}

	.dialog-title svg {
		display: block;
		width: 11px;
		height: 11px;
		stroke: #000;
	}

	.dialog-body {
		display: flex;
		flex-direction: column;
		gap: 9px;
		padding: 8px 7px 9px 8px;
	}

	.group-row {
		display: flex;
		gap: 8px;
	}

	.group {
		box-sizing: border-box;
		border: solid #a9a9e9;
		border-width: 0 1px 1px 0;
		background: #f1f4fa;
		box-shadow: inset 1px 0 #dce6f4;
		clip-path: polygon(0 0, calc(100% - 10px) 0, 100% 10px, 100% 100%, 0 100%);
	}

	/* the red frame reaches past this group, so its corner is painted, not clipped */
	.group--constants {
		clip-path: none;
	}

	.group--constants .group-head {
		margin-right: -1px;
		background: linear-gradient(225deg, #f0f0f0 7px, #dde7f6 8px);
	}

	.group--number {
		width: 52px;
	}

	.group--color {
		width: 67px;
	}

	.group--grow {
		flex: 1;
		min-width: 0;
	}

	.group-head {
		display: block;
		height: 16px;
		padding-left: 2px;
		border-bottom: 1px solid #fff;
		background: #dde7f6;
		color: #1f3f66;
		font: 11px/16px 'Liberation Sans', Arial, sans-serif;
	}

	.group-body {
		display: flex;
		gap: 4px;
		padding: 3px 3px 4px;
	}

	.group-body--color {
		justify-content: space-between;
		padding-left: 5px;
	}

	.field {
		flex: 1;
		min-width: 0;
		height: 20px;
		padding: 0 5px;
		border: 1px solid #7a7a7a;
		background: #fff;
	}

	.field--grey {
		background: #f0f0f0;
		text-align: right;
	}

	.swatch {
		box-sizing: border-box;
		width: 11px;
		height: 20px;
		border: 1px solid #000;
		background: #6666ff;
	}

	.tile {
		display: flex;
		flex: none;
		align-items: center;
		justify-content: center;
		width: 25px;
		height: 21px;
		border: 1px solid #adadad;
		background: #e1e1e1;
	}

	.tile--focus {
		border: 2px solid #0078d7;
		outline: 1px dotted #000;
		outline-offset: -3px;
	}

	.tile--off {
		border-color: #bfbfbf;
		background: #ccc;
	}

	.tile--units {
		flex-direction: column;
		font: italic 700 10px/11px 'Liberation Serif', serif;
	}

	.tile--units u {
		color: #2c448a;
	}

	.ruler {
		width: 16px;
		height: 5px;
		background: #6cbf63;
	}

	.constants {
		display: flex;
		flex-direction: column;
		justify-content: space-between;
		min-height: 166px;
		padding: 6px 2px 9px;
	}

	.constant {
		position: relative;
		display: flex;
		align-items: center;
		height: 20px;
	}

	.constant label {
		width: 193px;
	}

	.symbol {
		width: 22px;
		white-space: nowrap;
	}

	.symbol--greek {
		font-family: 'Liberation Serif', serif;
		font-size: 12px;
	}

	.symbol small {
		font: 9px/12px 'Liberation Sans', sans-serif;
	}

	.spin {
		display: flex;
		align-items: center;
		gap: 1px;
		box-sizing: border-box;
		width: 91px;
		height: 20px;
		padding: 1px;
		border: 1px solid #7f9db9;
		background: #fff;
	}

	.spin input {
		flex: 1;
		min-width: 0;
		padding-right: 4px;
		text-align: right;
	}

	.spin-pair {
		display: flex;
		flex-direction: column;
	}

	.spin button {
		display: flex;
		align-items: center;
		justify-content: center;
		width: 13px;
		height: 8px;
		border: solid #a8a8a8;
		border-width: 0 1px 1px 1px;
		background: #e6e6e6;
	}

	.spin svg {
		width: 5px;
		height: 3px;
	}

	.spin .spin-more {
		width: 9px;
		height: 16px;
		border-width: 1px;
	}

	.spin .spin-more svg {
		width: 3px;
		height: 5px;
	}

	.unit {
		padding-left: 5px;
		font: 12px/14px 'Liberation Sans', Arial, sans-serif;
	}

	.unit sup {
		margin-right: 1px;
		font-size: 10px;
		line-height: 1px;
		vertical-align: 3px;
	}

	.mark {
		position: absolute;
		top: -4px;
		left: -4px;
		box-sizing: border-box;
		width: 338px;
		height: 28px;
		border: 3px solid #c00000;
		pointer-events: none;
	}

	.blank {
		box-sizing: border-box;
		width: 143px;
		border: 1px solid #a9a9e9;
		border-top-color: #d8e4f6;
		border-left-color: #d8e4f6;
		background: #f1f4fa;
	}

	.combo {
		display: flex;
		flex: 1;
		align-items: center;
		box-sizing: border-box;
		min-width: 0;
		height: 20px;
		padding-right: 4px;
		border: 1px solid #7a7a7a;
		background: #fff;
	}

	.combo--grey {
		border-color: #adadad;
		background: #e1e1e1;
	}

	.combo input,
	.combo select {
		flex: 1;
		min-width: 0;
		height: 100%;
		padding-left: 2px;
	}

	.chevron {
		width: 10px;
		height: 6px;
		fill: none;
		stroke: #444;
		pointer-events: none;
	}

	.group-body--comment {
		gap: 5px;
		padding-bottom: 3px;
	}

	hr {
		width: 100%;
		height: 1px;
		margin: 0;
		border: none;
		border-bottom: 1px solid #fff;
		background: #a0a0a0;
	}

	.actions {
		display: flex;
		gap: 10px;
		padding: 2px 1px 0;
	}

	.spacer {
		flex: 1;
	}

	.push {
		width: 73px;
		height: 21px;
		border: 1px solid #adadad;
		background: #e1e1e1;
	}
</style>
